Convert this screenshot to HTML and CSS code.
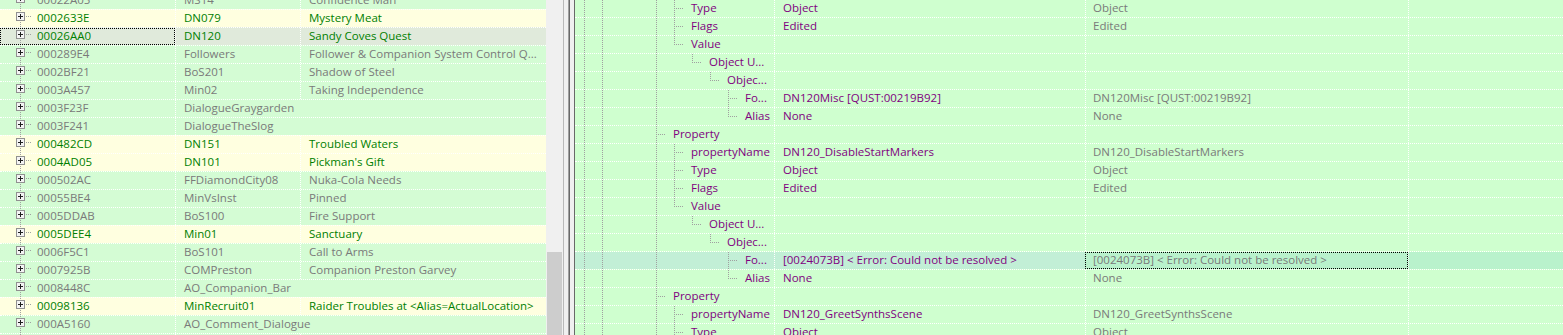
FILE: index.html
```html
<!DOCTYPE html>
<html>
<head>
<meta charset="utf-8">
<link rel="stylesheet" href="styles.css">
</head>
<body>
<div class="app">
  <div class="left">
    <div class="list">
      <div class="rows">
        <div class="lrow"><div class="c1"><span class="lt"><svg class="pm" width="9" height="9" viewBox="0 0 9 9"><rect x=".5" y=".5" width="8" height="8" fill="#f4f4f4" stroke="#919191"/><path d="M2 4.5h5M4.5 2v5" stroke="#1e1e1e"/></svg></span><span class="id">00022A05</span></div><div class="c2">MS14</div><div class="c3">Confidence Man</div></div>
        <div class="lrow y"><div class="c1"><span class="lt"><svg class="pm" width="9" height="9" viewBox="0 0 9 9"><rect x=".5" y=".5" width="8" height="8" fill="#f4f4f4" stroke="#919191"/><path d="M2 4.5h5M4.5 2v5" stroke="#1e1e1e"/></svg></span><span class="id">0002633E</span></div><div class="c2">DN079</div><div class="c3">Mystery Meat</div></div>
        <div class="lrow sel"><div class="c1 focus"><span class="lt"><svg class="pm" width="9" height="9" viewBox="0 0 9 9"><rect x=".5" y=".5" width="8" height="8" fill="#f4f4f4" stroke="#919191"/><path d="M2 4.5h5M4.5 2v5" stroke="#1e1e1e"/></svg></span><span class="id">00026AA0</span></div><div class="c2">DN120</div><div class="c3">Sandy Coves Quest</div></div>
        <div class="lrow"><div class="c1"><span class="lt"><svg class="pm" width="9" height="9" viewBox="0 0 9 9"><rect x=".5" y=".5" width="8" height="8" fill="#f4f4f4" stroke="#919191"/><path d="M2 4.5h5M4.5 2v5" stroke="#1e1e1e"/></svg></span><span class="id">000289E4</span></div><div class="c2">Followers</div><div class="c3">Follower &amp; Companion System Control Q...</div></div>
        <div class="lrow"><div class="c1"><span class="lt"><svg class="pm" width="9" height="9" viewBox="0 0 9 9"><rect x=".5" y=".5" width="8" height="8" fill="#f4f4f4" stroke="#919191"/><path d="M2 4.5h5M4.5 2v5" stroke="#1e1e1e"/></svg></span><span class="id">0002BF21</span></div><div class="c2">BoS201</div><div class="c3">Shadow of Steel</div></div>
        <div class="lrow"><div class="c1"><span class="lt"><svg class="pm" width="9" height="9" viewBox="0 0 9 9"><rect x=".5" y=".5" width="8" height="8" fill="#f4f4f4" stroke="#919191"/><path d="M2 4.5h5M4.5 2v5" stroke="#1e1e1e"/></svg></span><span class="id">0003A457</span></div><div class="c2">Min02</div><div class="c3">Taking Independence</div></div>
        <div class="lrow"><div class="c1"><span class="lt"><svg class="pm" width="9" height="9" viewBox="0 0 9 9"><rect x=".5" y=".5" width="8" height="8" fill="#f4f4f4" stroke="#919191"/><path d="M2 4.5h5M4.5 2v5" stroke="#1e1e1e"/></svg></span><span class="id">0003F23F</span></div><div class="c23">DialogueGraygarden</div></div>
        <div class="lrow"><div class="c1"><span class="lt"><svg class="pm" width="9" height="9" viewBox="0 0 9 9"><rect x=".5" y=".5" width="8" height="8" fill="#f4f4f4" stroke="#919191"/><path d="M2 4.5h5M4.5 2v5" stroke="#1e1e1e"/></svg></span><span class="id">0003F241</span></div><div class="c23">DialogueTheSlog</div></div>
        <div class="lrow y"><div class="c1"><span class="lt"><svg class="pm" width="9" height="9" viewBox="0 0 9 9"><rect x=".5" y=".5" width="8" height="8" fill="#f4f4f4" stroke="#919191"/><path d="M2 4.5h5M4.5 2v5" stroke="#1e1e1e"/></svg></span><span class="id">000482CD</span></div><div class="c2">DN151</div><div class="c3">Troubled Waters</div></div>
        <div class="lrow y"><div class="c1"><span class="lt"><svg class="pm" width="9" height="9" viewBox="0 0 9 9"><rect x=".5" y=".5" width="8" height="8" fill="#f4f4f4" stroke="#919191"/><path d="M2 4.5h5M4.5 2v5" stroke="#1e1e1e"/></svg></span><span class="id">0004AD05</span></div><div class="c2">DN101</div><div class="c3">Pickman's Gift</div></div>
        <div class="lrow"><div class="c1"><span class="lt"><svg class="pm" width="9" height="9" viewBox="0 0 9 9"><rect x=".5" y=".5" width="8" height="8" fill="#f4f4f4" stroke="#919191"/><path d="M2 4.5h5M4.5 2v5" stroke="#1e1e1e"/></svg></span><span class="id">000502AC</span></div><div class="c2">FFDiamondCity08</div><div class="c3">Nuka-Cola Needs</div></div>
        <div class="lrow"><div class="c1"><span class="lt"><svg class="pm" width="9" height="9" viewBox="0 0 9 9"><rect x=".5" y=".5" width="8" height="8" fill="#f4f4f4" stroke="#919191"/><path d="M2 4.5h5M4.5 2v5" stroke="#1e1e1e"/></svg></span><span class="id">00055BE4</span></div><div class="c2">MinVsInst</div><div class="c3">Pinned</div></div>
        <div class="lrow"><div class="c1"><span class="lt"><svg class="pm" width="9" height="9" viewBox="0 0 9 9"><rect x=".5" y=".5" width="8" height="8" fill="#f4f4f4" stroke="#919191"/><path d="M2 4.5h5M4.5 2v5" stroke="#1e1e1e"/></svg></span><span class="id">0005DDAB</span></div><div class="c2">BoS100</div><div class="c3">Fire Support</div></div>
        <div class="lrow y"><div class="c1"><span class="lt"><svg class="pm" width="9" height="9" viewBox="0 0 9 9"><rect x=".5" y=".5" width="8" height="8" fill="#f4f4f4" stroke="#919191"/><path d="M2 4.5h5M4.5 2v5" stroke="#1e1e1e"/></svg></span><span class="id">0005DEE4</span></div><div class="c2">Min01</div><div class="c3">Sanctuary</div></div>
        <div class="lrow"><div class="c1"><span class="lt"><svg class="pm" width="9" height="9" viewBox="0 0 9 9"><rect x=".5" y=".5" width="8" height="8" fill="#f4f4f4" stroke="#919191"/><path d="M2 4.5h5M4.5 2v5" stroke="#1e1e1e"/></svg></span><span class="id">0006F5C1</span></div><div class="c2">BoS101</div><div class="c3">Call to Arms</div></div>
        <div class="lrow"><div class="c1"><span class="lt"><svg class="pm" width="9" height="9" viewBox="0 0 9 9"><rect x=".5" y=".5" width="8" height="8" fill="#f4f4f4" stroke="#919191"/><path d="M2 4.5h5M4.5 2v5" stroke="#1e1e1e"/></svg></span><span class="id">0007925B</span></div><div class="c2">COMPreston</div><div class="c3">Companion Preston Garvey</div></div>
        <div class="lrow"><div class="c1"><span class="lt"><svg class="pm" width="9" height="9" viewBox="0 0 9 9"><rect x=".5" y=".5" width="8" height="8" fill="#f4f4f4" stroke="#919191"/><path d="M2 4.5h5M4.5 2v5" stroke="#1e1e1e"/></svg></span><span class="id">0008448C</span></div><div class="c23">AO_Companion_Bar</div></div>
        <div class="lrow y"><div class="c1"><span class="lt"><svg class="pm" width="9" height="9" viewBox="0 0 9 9"><rect x=".5" y=".5" width="8" height="8" fill="#f4f4f4" stroke="#919191"/><path d="M2 4.5h5M4.5 2v5" stroke="#1e1e1e"/></svg></span><span class="id">00098136</span></div><div class="c2">MinRecruit01</div><div class="c3">Raider Troubles at &lt;Alias=ActualLocation&gt;</div></div>
        <div class="lrow"><div class="c1"><span class="lt"><svg class="pm" width="9" height="9" viewBox="0 0 9 9"><rect x=".5" y=".5" width="8" height="8" fill="#f4f4f4" stroke="#919191"/><path d="M2 4.5h5M4.5 2v5" stroke="#1e1e1e"/></svg></span><span class="id">000A5160</span></div><div class="c23">AO_Comment_Dialogue</div></div>
        <div class="lrow"><div class="c1"><span class="lt"><svg class="pm" width="9" height="9" viewBox="0 0 9 9"><rect x=".5" y=".5" width="8" height="8" fill="#f4f4f4" stroke="#919191"/><path d="M2 4.5h5M4.5 2v5" stroke="#1e1e1e"/></svg></span><span class="id">000A6A9F</span></div><div class="c2">DN035</div><div class="c3">Quest</div></div>
      </div>
    </div>
    <div class="vscroll"><div class="thumb"></div></div>
  </div>
  <div class="split"><i class="s1"></i><i class="s2"></i><i class="s3"></i><i class="s4"></i><i class="s2"></i><i class="s4"></i></div>
  <div class="right">
    <div class="rrows">
      <div class="rrow"><div class="tr"><i class="v"></i><i class="v"></i><i></i><i></i><i class="v"></i><i class="tee"></i><span class="lbl">Type</span></div><div class="rc2">Object</div><div class="rc3">Object</div><div class="rc4"></div></div>
      <div class="rrow"><div class="tr"><i class="v"></i><i class="v"></i><i></i><i></i><i class="v"></i><i class="tee"></i><span class="lbl">Flags</span></div><div class="rc2">Edited</div><div class="rc3">Edited</div><div class="rc4"></div></div>
      <div class="rrow"><div class="tr"><i class="v"></i><i class="v"></i><i></i><i></i><i class="v"></i><i class="ell"></i><span class="lbl">Value</span></div><div class="rc2"></div><div class="rc3"></div><div class="rc4"></div></div>
      <div class="rrow"><div class="tr"><i class="v"></i><i class="v"></i><i></i><i></i><i class="v"></i><i></i><i class="ell"></i><span class="lbl">Object U...</span></div><div class="rc2"></div><div class="rc3"></div><div class="rc4"></div></div>
      <div class="rrow"><div class="tr"><i class="v"></i><i class="v"></i><i></i><i></i><i class="v"></i><i></i><i></i><i class="ell"></i><span class="lbl">Objec...</span></div><div class="rc2"></div><div class="rc3"></div><div class="rc4"></div></div>
      <div class="rrow"><div class="tr"><i class="v"></i><i class="v"></i><i></i><i></i><i class="v"></i><i></i><i></i><i></i><i class="tee"></i><span class="lbl">Fo...</span></div><div class="rc2">DN120Misc [QUST:00219B92]</div><div class="rc3">DN120Misc [QUST:00219B92]</div><div class="rc4"></div></div>
      <div class="rrow"><div class="tr"><i class="v"></i><i class="v"></i><i></i><i></i><i class="v"></i><i></i><i></i><i></i><i class="ell"></i><span class="lbl">Alias</span></div><div class="rc2">None</div><div class="rc3">None</div><div class="rc4"></div></div>
      <div class="rrow"><div class="tr"><i class="v"></i><i class="v"></i><i></i><i></i><i class="tee"></i><span class="lbl">Property</span></div><div class="rc2"></div><div class="rc3"></div><div class="rc4"></div></div>
      <div class="rrow"><div class="tr"><i class="v"></i><i class="v"></i><i></i><i></i><i class="v"></i><i class="tee"></i><span class="lbl">propertyName</span></div><div class="rc2">DN120_DisableStartMarkers</div><div class="rc3">DN120_DisableStartMarkers</div><div class="rc4"></div></div>
      <div class="rrow"><div class="tr"><i class="v"></i><i class="v"></i><i></i><i></i><i class="v"></i><i class="tee"></i><span class="lbl">Type</span></div><div class="rc2">Object</div><div class="rc3">Object</div><div class="rc4"></div></div>
      <div class="rrow"><div class="tr"><i class="v"></i><i class="v"></i><i></i><i></i><i class="v"></i><i class="tee"></i><span class="lbl">Flags</span></div><div class="rc2">Edited</div><div class="rc3">Edited</div><div class="rc4"></div></div>
      <div class="rrow"><div class="tr"><i class="v"></i><i class="v"></i><i></i><i></i><i class="v"></i><i class="ell"></i><span class="lbl">Value</span></div><div class="rc2"></div><div class="rc3"></div><div class="rc4"></div></div>
      <div class="rrow"><div class="tr"><i class="v"></i><i class="v"></i><i></i><i></i><i class="v"></i><i></i><i class="ell"></i><span class="lbl">Object U...</span></div><div class="rc2"></div><div class="rc3"></div><div class="rc4"></div></div>
      <div class="rrow"><div class="tr"><i class="v"></i><i class="v"></i><i></i><i></i><i class="v"></i><i></i><i></i><i class="ell"></i><span class="lbl">Objec...</span></div><div class="rc2"></div><div class="rc3"></div><div class="rc4"></div></div>
      <div class="rrow hl"><div class="tr"><i class="v"></i><i class="v"></i><i></i><i></i><i class="v"></i><i></i><i></i><i></i><i class="tee"></i><span class="lbl">Fo...</span></div><div class="rc2">[0024073B] &lt; Error: Could not be resolved &gt;</div><div class="rc3 focus">[0024073B] &lt; Error: Could not be resolved &gt;</div><div class="rc4"></div></div>
      <div class="rrow"><div class="tr"><i class="v"></i><i class="v"></i><i></i><i></i><i class="v"></i><i></i><i></i><i></i><i class="ell"></i><span class="lbl">Alias</span></div><div class="rc2">None</div><div class="rc3">None</div><div class="rc4"></div></div>
      <div class="rrow"><div class="tr"><i class="v"></i><i class="v"></i><i></i><i></i><i class="tee"></i><span class="lbl">Property</span></div><div class="rc2"></div><div class="rc3"></div><div class="rc4"></div></div>
      <div class="rrow"><div class="tr"><i class="v"></i><i class="v"></i><i></i><i></i><i class="v"></i><i class="tee"></i><span class="lbl">propertyName</span></div><div class="rc2">DN120_GreetSynthsScene</div><div class="rc3">DN120_GreetSynthsScene</div><div class="rc4"></div></div>
      <div class="rrow"><div class="tr"><i class="v"></i><i class="v"></i><i></i><i></i><i class="v"></i><i class="tee"></i><span class="lbl">Type</span></div><div class="rc2">Object</div><div class="rc3">Object</div><div class="rc4"></div></div>
    </div>
  </div>
</div>
</body>
</html>
```

FILE: styles.css
```css
* { box-sizing: border-box; }
html, body { margin: 0; padding: 0; background: #f0f0f0; }
body {
  font-family: "Open Sans", "Noto Sans", sans-serif;
  font-size: 11.5px;
}
.app { display: flex; width: 1563px; height: 335px; overflow: hidden; }

/* left list */
.left { display: flex; flex: none; width: 563px; height: 335px; }
.list { flex: none; width: 546px; height: 335px; overflow: hidden; background: #d4fcd4; }
.rows { margin-top: -9px; }
.lrow {
  display: flex; height: 18px;
  border-top: 1px dotted #fff;
  background: #d4fcd4; color: #7a7a7a;
}
.lrow.y { background: #ffffe0; color: #008000; }
.lrow.sel { background: #e0eadb; color: #008000; }
.c1, .c2, .c3, .c23 {
  height: 17px; line-height: 15px;
  white-space: nowrap; overflow: hidden;
}
.c1 { flex: none; width: 175px; display: flex; }
.c1.focus { outline: 1px dotted #000; outline-offset: -1px; }
.lt {
  flex: none; width: 37px; height: 17px;
  padding: 2px 0 0 16px;
  background:
    repeating-linear-gradient(to bottom, #a0a0a0 0 1px, transparent 1px 2px) 20px 0 / 1px 100% no-repeat,
    repeating-linear-gradient(to right, #a0a0a0 0 1px, transparent 1px 2px) 26px 6px / 6px 1px no-repeat;
}
.pm { display: block; }
.c2 { flex: none; width: 125px; border-left: 1px dotted #fff; padding-left: 8px; }
.c3, .c23 { flex: 1; border-left: 1px dotted #fff; padding-left: 8px; }

.vscroll {
  flex: none; width: 17px; height: 335px; background: #f0f0f0;
  display: flex; flex-direction: column; justify-content: flex-end;
  padding: 0 1px;
}
.thumb { height: 83px; background: #cdcdcd; }

/* splitter */
.split { display: flex; flex: none; width: 12px; height: 335px; }
.split i { display: block; height: 100%; }
.s1 { width: 1px; background: #b9b9b9; }
.s2 { width: 4px; background: #f0f0f0; }
.s3 { width: 1px; background: #a0a0a0; }
.s4 { width: 1px; background: #696969; }

/* right tree view */
.right { flex: 1; height: 335px; overflow: hidden; background: #cfffcf; }
.rrows { margin-top: -1px; }
.rrow {
  display: flex; height: 18px;
  border-top: 1px dotted #fff;
  background: #cfffcf; color: #800080;
}
.tr, .rc2, .rc3, .rc4 {
  height: 17px; line-height: 15px;
  white-space: nowrap; overflow: hidden;
}
.tr { flex: none; width: 199px; display: flex; padding-left: 9px; }
.tr i { display: block; flex: none; width: 18px; height: 17px; }
.tr i.v {
  background: repeating-linear-gradient(to bottom, #a0a0a0 0 1px, transparent 1px 2px) 0 0 / 1px 100% no-repeat;
}
.tr i.tee {
  width: 17px;
  background:
    repeating-linear-gradient(to bottom, #a0a0a0 0 1px, transparent 1px 2px) 0 0 / 1px 100% no-repeat,
    repeating-linear-gradient(to right, #a0a0a0 0 1px, transparent 1px 2px) 2px 8px / 8px 1px no-repeat;
}
.tr i.ell {
  width: 17px;
  background:
    repeating-linear-gradient(to bottom, #a0a0a0 0 1px, transparent 1px 2px) 0 0 / 1px 9px no-repeat,
    repeating-linear-gradient(to right, #a0a0a0 0 1px, transparent 1px 2px) 2px 8px / 8px 1px no-repeat;
}
.lbl { display: block; }
.rc2 { flex: none; width: 311px; border-left: 1px dotted #fff; padding-left: 8px; }
.rc3 { flex: none; width: 323px; border-left: 1px dotted #fff; padding-left: 7px; color: #7a7a7a; }
.rc4 { flex: 1; border-left: 1px dotted #fff; }
.rc3.focus { outline: 1px dotted #000; outline-offset: -1px; }
.rrow.hl .tr, .rrow.hl .rc2 { background: #c2efd6; }
.rrow.hl .rc3, .rrow.hl .rc4 { background: #b9f2cc; }
```
